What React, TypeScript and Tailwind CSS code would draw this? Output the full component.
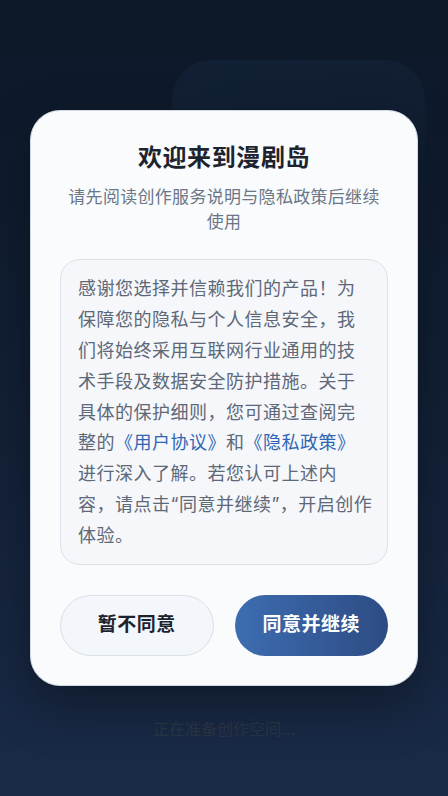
import { useState } from 'react';

const FONT = 'font-["Inter","Noto_Sans_CJK_SC",sans-serif]';

export default function App() {
  const [agreed, setAgreed] = useState<boolean | null>(null);

  return (
    <div className={`relative h-[796px] w-full overflow-hidden bg-gradient-to-b from-[#0d1828] via-[#122036] to-[#1a2b48] ${FONT}`}>
      {/* page behind the dialog */}
      <div className="flex h-full flex-col justify-between">
        <div className="ml-auto mr-[23px] mt-[60px] h-[320px] w-[253px] rounded-[40px] bg-gradient-to-br from-[#122035] to-[#101d31]" />
        <p className="pb-[55px] text-center text-[16px] text-[#2b3544]">正在准备创作空间...</p>
      </div>

      {/* consent dialog */}
      <div className="absolute inset-0 flex items-center justify-center px-[30px]">
        <div className="w-full rounded-[30px] border border-[#cfd8e3] bg-[#f9fbfd] px-[29px] pb-[29px] pt-[31px] shadow-[0_20px_50px_rgba(0,0,0,0.35)]">
          <h1 className="text-center text-[24px] font-bold leading-[32px] tracking-[0.6px] text-[#1d2430]">
            欢迎来到漫剧岛
          </h1>
          <p className="mt-[11px] text-center text-[17px] leading-[25px] tracking-[0.3px] text-[#6b7787]">
            请先阅读创作服务说明与隐私政策后继续使用
          </p>

          <div className="mt-[24px] rounded-[20px] border border-[#dbe2ea] bg-[#f5f7fa] pb-[12px] pl-[17px] pr-[14px] pt-[14px]">
            <p className="text-[18px] leading-[30.8px] tracking-[0.5px] text-[#5d6878]">
              感谢您选择并信赖我们的产品！为保障您的隐私与个人信息安全，我们将始终采用互联网行业通用的技术手段及数据安全防护措施。关于具体的保护细则，您可通过查阅完整的<span className="text-[#2f66b3]">《用户协议》</span>和<span className="text-[#2f66b3]">《隐私政策》</span>进行深入了解。若您认可上述内容，请点击“同意并继续”，开启创作体验。
            </p>
          </div>

          <div className="mt-[30px] grid grid-cols-2 gap-[21px]">
            <button
              onClick={() => setAgreed(false)}
              className="h-[61px] rounded-full border border-[#d9e0e9] bg-[#f3f6fa] text-[19px] font-bold tracking-[0.5px] text-[#1d2430]"
            >
              暂不同意
            </button>
            <button
              onClick={() => setAgreed(true)}
              className={`h-[61px] rounded-full bg-gradient-to-r from-[#3d6db1] to-[#2d4c84] text-[19px] font-bold tracking-[0.5px] text-white ${agreed ? 'opacity-90' : ''}`}
            >
              同意并继续
            </button>
          </div>
        </div>
      </div>
    </div>
  );
}
